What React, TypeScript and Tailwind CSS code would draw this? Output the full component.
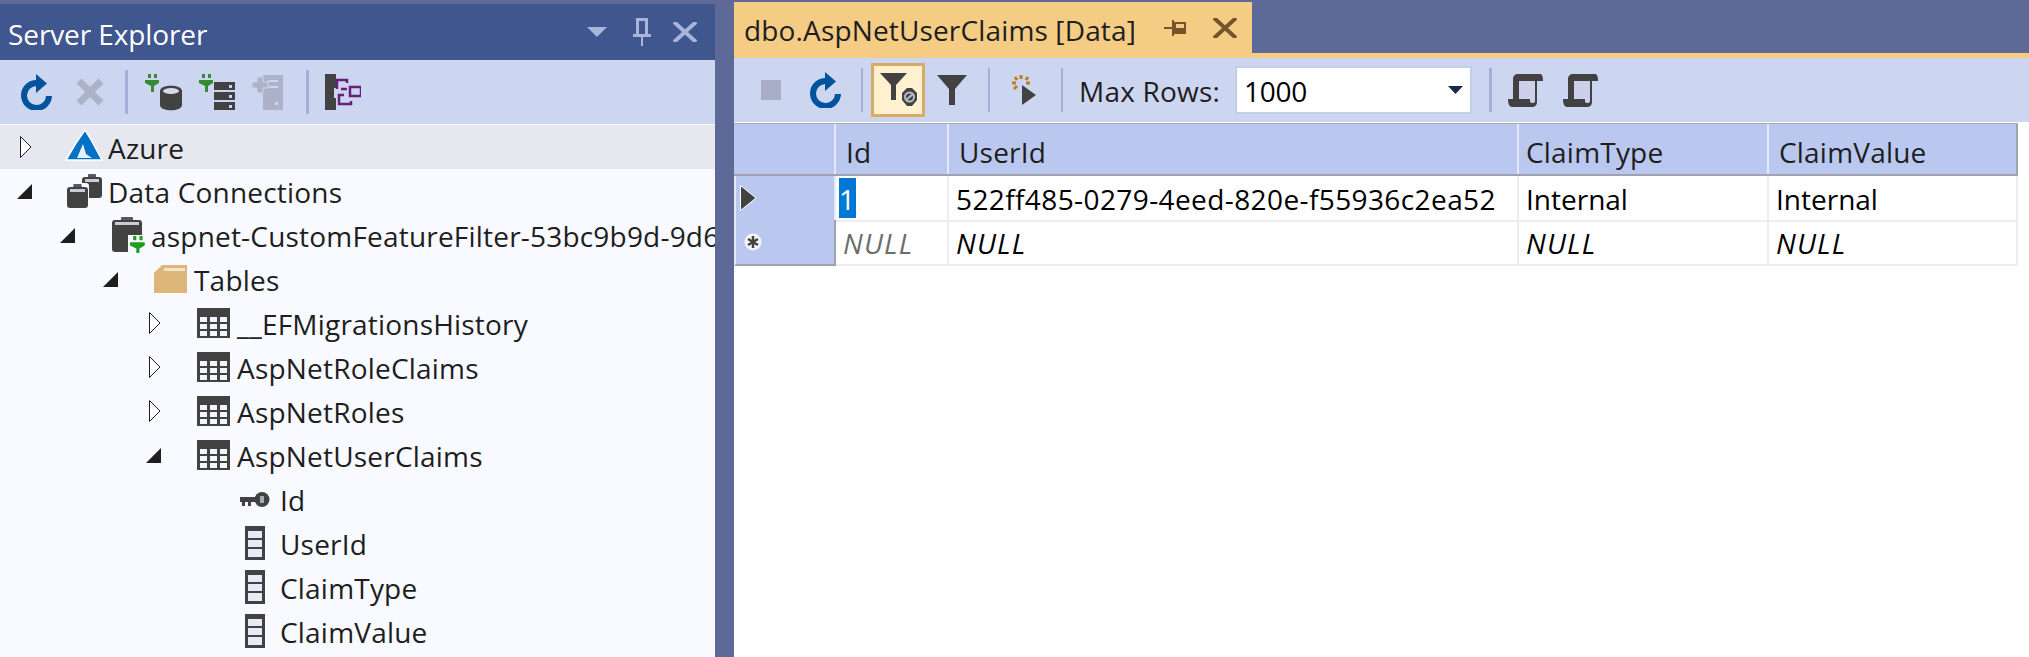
const font = "font-['Open_Sans',sans-serif]"

function Refresh() {
  return (
    <svg width="32" height="36" viewBox="0 0 32 36">
      <path d="M16 9A12.5 12.5 0 1 0 28 22" fill="none" stroke="#00539c" strokeWidth="6" />
      <path d="M15 0L26 9.500L15 19Z" fill="#00539c" />
    </svg>
  )
}

function Plug({ x = 0, y = 0 }: { x?: number; y?: number }) {
  return (
    <g transform={`translate(${x} ${y})`} fill="#388a34">
      <rect x="3" y="0" width="3" height="4" />
      <rect x="9" y="0" width="3" height="4" />
      <path d="M0 6H14V9L9 12V18H6V12L0 9Z" />
    </g>
  )
}

function PlugDb() {
  return (
    <svg width="37" height="37" viewBox="0 0 37 37">
      <Plug />
      <path d="M15 17C15 10 37 10 37 17V31C37 38 15 38 15 31Z" fill="#424242" />
      <ellipse cx="26" cy="17" rx="8" ry="3" fill="#d5d9ec" />
    </svg>
  )
}

function PlugServer() {
  return (
    <svg width="36" height="36" viewBox="0 0 36 36">
      <Plug x={0} y={0} />
      {[8, 18, 28].map((y) => (
        <g key={y}>
          <rect x="15" y={y} width="21" height="8" fill="#424242" />
          <rect x="30" y={y + 3} width="3" height="3" fill="#ccd6f0" />
        </g>
      ))}
    </svg>
  )
}

function AddServer() {
  return (
    <svg width="31" height="36" viewBox="0 0 31 36" fill="#acb3c9">
      <path d="M11 1H31V36H11Z" />
      <path d="M0 8H5V3H11V8H16V14H11V19H5V14H0Z" stroke="#ccd6f0" />
      <rect x="16" y="6" width="10" height="2" fill="#ccd6f0" />
      <rect x="17" y="12" width="9" height="2" fill="#ccd6f0" />
      <rect x="23" y="28" width="3" height="3" fill="#ccd6f0" />
    </svg>
  )
}

function SchemaView() {
  return (
    <svg width="36" height="36" viewBox="0 0 36 36">
      <path d="M0 0H11V14H9V24H11V36H0Z" fill="#424242" />
      <g fill="none" stroke="#68217a" strokeWidth="2.500">
        <path d="M12 15V6H22V9M16 15H22" />
        <rect x="25" y="13" width="11" height="9" />
        <path d="M19 21H14V30H26V27" />
      </g>
    </svg>
  )
}

function Funnel({ color = "#424242" }: { color?: string }) {
  return (
    <svg width="30" height="30" viewBox="0 0 30 30">
      <path d="M0 0H30L18 14V30H12V14Z" fill={color} />
    </svg>
  )
}

function FilterOff() {
  return (
    <svg width="38" height="36" viewBox="0 0 38 36">
      <path d="M1 1H28L17 13V28H12V13Z" fill="#424242" />
      <path d="M23 21L28 16H33L38 21V28L33 34H28L23 28Z" fill="#424242" />
      <circle cx="30.500" cy="25" r="4.500" fill="none" stroke="#b9bcc6" strokeWidth="2" />
      <path d="M27 28L34 22" stroke="#b9bcc6" strokeWidth="2" />
    </svg>
  )
}

function RunQuery() {
  return (
    <svg width="24" height="30" viewBox="0 0 24 30">
      <path d="M10 10L24 20L10 30Z" fill="#424242" />
      <g stroke="#c27d1a" strokeWidth="3">
        <path d="M9 0V4M3 2L5 5M14 5L16 2M0 8H4M14 8H18M2 14L5 11" />
      </g>
    </svg>
  )
}

function Scroll() {
  return (
    <svg width="36" height="33" viewBox="0 0 36 33">
      <path d="M5 25V5C5 2 7 0 10 0H32C34 0 35 2 35 7H29V28C29 31 27 33 24 33H4C1 33 0 29 0 25Z" fill="#424242" />
      <path d="M11 7H27V27C27 29 24 30 22 28V25H11Z" fill="#ccd0ea" />
    </svg>
  )
}

function ClosedArrow() {
  return (
    <svg width="12" height="22" viewBox="0 0 12 22" className="ml-[3px]">
      <path d="M.5 .5L11 11L.5 21.500Z" fill="#ffffff" stroke="#1e1e1e" />
    </svg>
  )
}

function OpenArrow() {
  return (
    <svg width="15" height="15" viewBox="0 0 15 15">
      <path d="M15 0V15H0Z" fill="#1e1e1e" />
    </svg>
  )
}

function AzureIcon() {
  return (
    <svg width="38" height="32" viewBox="0 0 38 32" className="mb-[5px]">
      <path d="M20 1L25 9L37 31H1L11 14Z" fill="#0072c6" stroke="#ffffff" strokeWidth="1.500" />
      <path d="M18 15L12 29H27L21 25Z" fill="#e8f1fa" />
    </svg>
  )
}

function Clip({ x, y, w, h, light = "#c9ccd8" }: { x: number; y: number; w: number; h: number; light?: string }) {
  return (
    <g>
      <rect x={x + w * 0.3} y={y} width={w * 0.4} height="4" rx="1" fill="#58585e" />
      <rect x={x} y={y + 3} width={w} height={h - 3} rx="3" fill="#424242" />
      <rect x={x + 3} y={y + 5} width={w - 6} height="3" fill={light} />
    </g>
  )
}

function ConnectionsIcon() {
  return (
    <svg width="37" height="35" viewBox="0 0 37 35" className="ml-px">
      <Clip x={16} y={0} w={20} h={24} />
      <rect x="0" y="9" width="23" height="26" rx="3" fill="#f8faff" />
      <Clip x={1} y={10} w={21} h={24} />
    </svg>
  )
}

function DatabaseIcon() {
  return (
    <svg width="33" height="36" viewBox="0 0 33 36" className="ml-[4px]">
      <Clip x={0} y={0} w={30} h={35} />
      <g transform="translate(18 19)">
        <rect x="-2" y="-1" width="18" height="18" fill="#f8faff" />
        <g transform="scale(1.050)" fill="#1f9d1f">
          <rect x="3" y="0" width="3" height="4" />
          <rect x="9" y="0" width="3" height="4" />
          <path d="M0 6H14V9L9 12V17H6V12L0 9Z" />
        </g>
      </g>
    </svg>
  )
}

function FolderIcon() {
  return (
    <svg width="33" height="28" viewBox="0 0 33 28" className="ml-[3px]">
      <path d="M0 8L8 0H33V28H0Z" fill="#dcb67a" />
      <path d="M10 3H31V6H10Z" fill="#f3e3c6" />
    </svg>
  )
}

function TableIcon() {
  const rows = [9, 16, 23]
  const cols = [3, 13, 23]
  return (
    <svg width="33" height="30" viewBox="0 0 33 30" className="ml-[3px]">
      <rect width="33" height="30" fill="#424242" />
      {rows.map((y) =>
        cols.map((x) => <rect key={`${x}-${y}`} x={x} y={y} width="7" height="5" fill="#f4f5fa" />),
      )}
    </svg>
  )
}

function KeyIcon() {
  return (
    <svg width="30" height="15" viewBox="0 0 30 15" className="ml-[3px]">
      <path d="M0 5H15V10H11V14H8V10H5V14H2V10H0Z" fill="#424242" />
      <circle cx="22" cy="7.500" r="7.500" fill="#424242" />
      <rect x="20" y="4" width="4" height="7" fill="#a9abb5" />
    </svg>
  )
}

function ColumnIcon() {
  return (
    <svg width="20" height="34" viewBox="0 0 20 34" className="ml-[8px]">
      <rect width="20" height="34" fill="#424242" />
      <rect x="3" y="5" width="14" height="7" fill="#e8eaf5" />
      <rect x="3" y="14" width="14" height="7" fill="#e8eaf5" />
      <rect x="3" y="23" width="14" height="8" fill="#e8eaf5" />
    </svg>
  )
}

const rows = [
  { label: "Azure", pad: "pl-[17px]", arrow: "closed", icon: <AzureIcon />, bg: "bg-[#e6e7ef]" },
  { label: "Data Connections", pad: "pl-[17px]", arrow: "open", icon: <ConnectionsIcon /> },
  { label: "aspnet-CustomFeatureFilter-53bc9b9d-9d6", pad: "pl-[60px]", arrow: "open", icon: <DatabaseIcon /> },
  { label: "Tables", pad: "pl-[103px]", arrow: "open", icon: <FolderIcon /> },
  { label: "__EFMigrationsHistory", pad: "pl-[146px]", arrow: "closed", icon: <TableIcon /> },
  { label: "AspNetRoleClaims", pad: "pl-[146px]", arrow: "closed", icon: <TableIcon /> },
  { label: "AspNetRoles", pad: "pl-[146px]", arrow: "closed", icon: <TableIcon /> },
  { label: "AspNetUserClaims", pad: "pl-[146px]", arrow: "open", icon: <TableIcon /> },
  { label: "Id", pad: "pl-[189px]", arrow: "", icon: <KeyIcon /> },
  { label: "UserId", pad: "pl-[189px]", arrow: "", icon: <ColumnIcon /> },
  { label: "ClaimType", pad: "pl-[189px]", arrow: "", icon: <ColumnIcon /> },
  { label: "ClaimValue", pad: "pl-[189px]", arrow: "", icon: <ColumnIcon /> },
]

function Sep({ className = "" }: { className?: string }) {
  return <div className={`h-[44px] bg-[#a0b0d6] shrink-0 ${className}`} />
}

function ServerExplorer() {
  return (
    <div className="w-[715px] shrink-0 h-full flex flex-col pt-[4px]">
      <div className="h-[56px] bg-[#40568f] flex items-center text-[#ffffff] pl-[8px] pr-[18px]">
        <span className="text-[28px] tracking-[-0.1px] pt-[3px]">Server Explorer</span>
        <svg width="20" height="10" viewBox="0 0 20 10" className="ml-auto">
          <path d="M0 0H20L10 10Z" fill="#a8b5d8" />
        </svg>
        <svg width="18" height="28" viewBox="0 0 18 28" className="ml-[26px]">
          <path d="M3 0H15V16H18V19H10V28H8V19H0V16H3Z M6 3V16H12V3Z" fill="#a8b5d8" fillRule="evenodd" />
        </svg>
        <svg width="24" height="20" viewBox="0 0 24 20" className="ml-[22px]">
          <path d="M1 0L23 20M23 0L1 20" stroke="#a8b5d8" strokeWidth="4" />
        </svg>
      </div>
      <div className="h-[64px] bg-[#ccd6f0] flex items-center pl-[21px]">
        <Refresh />
        <svg width="28" height="28" viewBox="0 0 28 28" className="ml-[23px]">
          <path d="M3 3L25 25M25 3L3 25" stroke="#acb3c9" strokeWidth="7" />
        </svg>
        <Sep className="w-[3px] ml-[21px]" />
        <div className="ml-[17px]"><PlugDb /></div>
        <div className="ml-[17px]"><PlugServer /></div>
        <div className="ml-[17px]"><AddServer /></div>
        <Sep className="w-[3px] ml-[23px]" />
        <div className="ml-[16px]"><SchemaView /></div>
      </div>
      <div className="flex-1 bg-[#f8faff] border-t border-[#ffffff] overflow-hidden">
        {rows.map((row) => (
          <div
            key={row.label}
            className={`h-[44px] flex items-center whitespace-nowrap text-[#1e1e1e] text-[28px] tracking-[0.2px] ${row.pad} ${row.bg ?? ""}`}
          >
            <div className="w-[16px] shrink-0 mr-[32px] flex items-center">
              {row.arrow === "closed" && <ClosedArrow />}
              {row.arrow === "open" && <OpenArrow />}
            </div>
            <div className="w-[43px] shrink-0 flex items-center">{row.icon}</div>
            <span className="pt-px">{row.label}</span>
          </div>
        ))}
      </div>
    </div>
  )
}

const cols = "grid grid-cols-[102px_113px_570px_250px_249px]"
const headCell = "h-full flex items-center border-[#e4e9f8] pt-[5px] text-[#1e1e1e] tracking-[0.2px]"
const bodyCell = "h-full flex items-center border-r-2 border-b-2 border-[#eeeeee] whitespace-nowrap text-[#000000]"
const textCell = `${bodyCell} pl-[7px] pt-[2px]`
const nullCell = `${textCell} italic tracking-[1.2px]`

function DataPane() {
  return (
    <div className="flex-1 h-full flex flex-col pt-[2px] min-w-0">
      <div className="h-[51px] flex">
        <div className="w-[518px] bg-[#f5cc84] flex items-center pl-[10px] pr-[15px] text-[#1e1e1e] text-[28px] tracking-[0.15px] whitespace-nowrap">
          <span className="pt-[5px]">dbo.AspNetUserClaims [Data]</span>
          <svg width="22" height="16" viewBox="0 0 22 16" className="ml-auto">
            <path d="M0 7H8V0H10V2H22V14H10V16H8V9H0ZM12 4V8H20V4Z" fill="#75542b" fillRule="evenodd" />
          </svg>
          <svg width="24" height="20" viewBox="0 0 24 20" className="ml-[27px]">
            <path d="M1 0L23 20M23 0L1 20" stroke="#75542b" strokeWidth="4" />
          </svg>
        </div>
      </div>
      <div className="h-[5px] bg-[#f5cc84]" />
      <div className="h-[64px] bg-[#ccd6f0] flex items-center pl-[27px] text-[#1e1e1e] text-[28px] tracking-[0.2px]">
        <div className="w-[20px] h-[20px] bg-[#a9aec8]" />
        <div className="ml-[29px]"><Refresh /></div>
        <Sep className="w-[2px] ml-[19px]" />
        <div className="ml-[8px] w-[54px] h-[54px] bg-[#fff0d0] border-[3px] border-[#d8ac66] flex items-center justify-center">
          <FilterOff />
        </div>
        <div className="ml-[12px]"><Funnel /></div>
        <Sep className="w-[2px] ml-[21px]" />
        <div className="ml-[22px]"><RunQuery /></div>
        <Sep className="w-[2px] ml-[25px]" />
        <span className="ml-[16px] w-[143px] whitespace-nowrap pt-[2px]">Max Rows:</span>
        <div className="ml-[13px] w-[237px] h-[48px] bg-[#ffffff] border-[2px] border-[#c2cde8] flex items-center pl-[7px] text-[#000000] tracking-[-0.3px]">
          <span className="pt-[2px]">1000</span>
          <svg width="15" height="8" viewBox="0 0 15 8" className="ml-auto mr-[7px]">
            <path d="M0 0H15L7.500 8Z" fill="#1b2a4a" />
          </svg>
        </div>
        <Sep className="w-[3px] ml-[17px]" />
        <div className="ml-[16px]"><Scroll /></div>
        <div className="ml-[19px]"><Scroll /></div>
      </div>
      <div className="flex-1 bg-[#ffffff] pt-px text-[28px]">
        <div className="w-[1284px] border-t border-[#a6a9b4]">
          <div className={`h-[52px] ${cols} bg-[#bac8ef] border-b-2 border-[#a0a3ae] border-r-2`}>
            <div className={`${headCell} border-r-2`} />
            <div className={`${headCell} border-r-2 pl-[10px]`}>Id</div>
            <div className={`${headCell} border-r-2 pl-[10px]`}>UserId</div>
            <div className={`${headCell} border-r-2 pl-[7px]`}>ClaimType</div>
            <div className={`${headCell} pl-[10px]`}>ClaimValue</div>
          </div>
          <div className={`h-[44px] ${cols}`}>
            <div className="h-full bg-[#bac8ef] border-b-2 border-r-2 border-l-2 border-[#e4e9f8] flex items-center pl-[4px]">
              <svg width="17" height="26" viewBox="0 0 17 26">
                <path d="M.5 .5L16 13L.5 25.500Z" fill="#424242" stroke="#ffffff" />
              </svg>
            </div>
            <div className={`${bodyCell} pl-[3px]`}>
              <span className="h-[40px] w-[17px] bg-[#0078d7] text-[#ffffff] flex items-center pt-[2px]">1</span>
            </div>
            <div className={`${textCell} tracking-[0.4px]`}>522ff485-0279-4eed-820e-f55936c2ea52</div>
            <div className={textCell}>Internal</div>
            <div className={textCell}>Internal</div>
          </div>
          <div className={`h-[45px] ${cols}`}>
            <div className="h-full bg-[#bac8ef] border-b-2 border-r-2 border-[#a0a3ae] border-l-2 border-l-[#e4e9f8] flex items-center pl-[8px]">
              <svg width="18" height="18" viewBox="0 0 18 18">
                <circle cx="9" cy="9" r="8.500" fill="#f4f6fc" />
                <path d="M9 3V15M4 6L14 12M14 6L4 12" stroke="#424242" strokeWidth="2.500" />
              </svg>
            </div>
            <div className={`${nullCell} text-[#6d6d6d]`}>NULL</div>
            <div className={nullCell}>NULL</div>
            <div className={nullCell}>NULL</div>
            <div className={nullCell}>NULL</div>
          </div>
        </div>
      </div>
    </div>
  )
}

export default function App() {
  return (
    <div className={`w-[2029px] h-[657px] overflow-hidden bg-[#5d6a98] ${font}`}>
      <div className="h-full flex gap-[19px]">
        <ServerExplorer />
        <DataPane />
      </div>
    </div>
  )
}
